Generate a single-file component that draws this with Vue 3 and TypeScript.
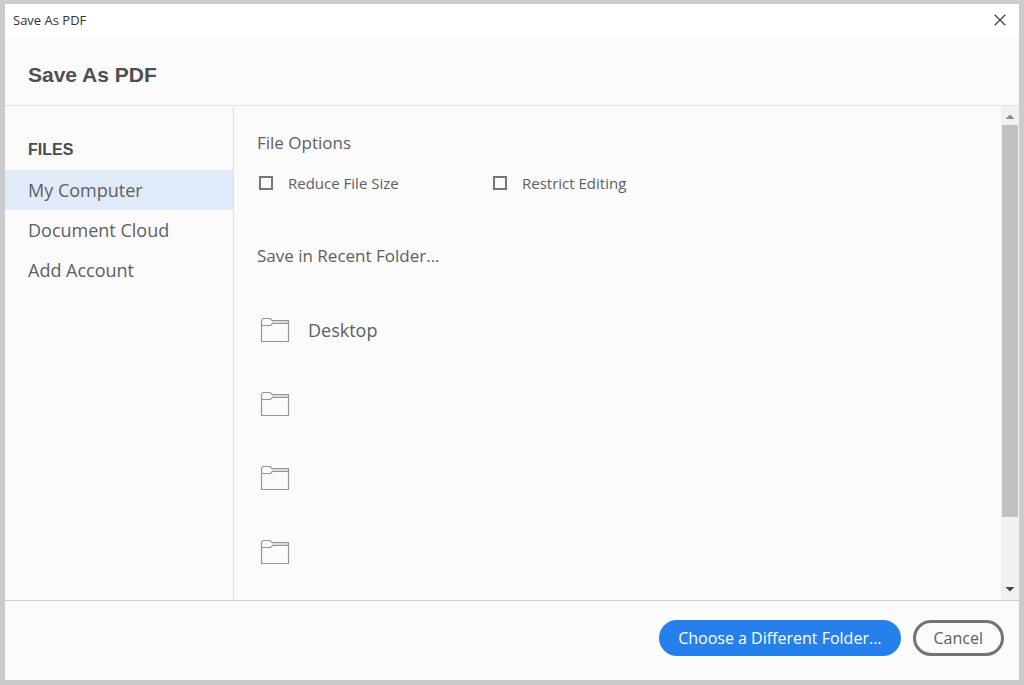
<script setup lang="ts">
import { ref } from 'vue'

interface Option {
  id: string
  label: string
  checked: boolean
}

const places: string[] = ['My Computer', 'Document Cloud', 'Add Account']
const selected = ref<string>('My Computer')
const options = ref<Option[]>([
  { id: 'reduce', label: 'Reduce File Size', checked: false },
  { id: 'restrict', label: 'Restrict Editing', checked: false },
])
const folders: string[] = ['Desktop', '', '', '']
</script>

<template>
  <div class="dialog" role="dialog" aria-labelledby="dialog-title">
    <div class="titlebar">
      <span>Save As PDF</span>
      <button class="close" type="button" aria-label="Close">
        <svg width="12" height="12" viewBox="0 0 12 12">
          <path d="M.7.7l10.6 10.6M11.3.7L.7 11.3" fill="none" stroke="#444" stroke-width="1.3" />
        </svg>
      </button>
    </div>

    <header class="header">
      <h1 id="dialog-title">Save As PDF</h1>
    </header>

    <div class="body">
      <nav class="sidebar">
        <h2>FILES</h2>
        <button
          v-for="place in places"
          :key="place"
          type="button"
          class="place"
          :class="{ active: place === selected }"
          @click="selected = place"
        >{{ place }}</button>
      </nav>

      <main class="content">
        <h3>File Options</h3>
        <div class="options">
          <label v-for="option in options" :key="option.id" :for="option.id">
            <input :id="option.id" v-model="option.checked" type="checkbox" />
            {{ option.label }}
          </label>
        </div>
        <h3>Save in Recent Folder...</h3>
        <ul class="folders">
          <li v-for="(folder, i) in folders" :key="i">
            <button type="button" class="folder" :aria-label="folder || 'Folder'">
              <svg width="30" height="26" viewBox="0 0 30 26" fill="none" stroke="#959595" stroke-width="1.2">
                <path d="M1.5 24.5V3.5L3 1.5H10L12 3.5H28.5V24.5Z" />
                <path d="M1.5 8.5H10.5L12.5 6.5H28.5" />
                <path d="M12 5H28" stroke="#c4c4c4" />
              </svg>
              <span>{{ folder }}</span>
            </button>
          </li>
        </ul>
      </main>

      <div class="scrollbar" aria-hidden="true">
        <svg width="16" height="19" viewBox="0 0 16 19"><path d="M3.5 13L8 8.5l4.5 4.5z" fill="#8b8b8b" /></svg>
        <div class="track"><div class="thumb"></div></div>
        <svg width="16" height="19" viewBox="0 0 16 19"><path d="M3.5 6L8 10.5l4.5-4.5z" fill="#444" /></svg>
      </div>
    </div>

    <footer class="footer">
      <button type="button" class="primary">Choose a Different Folder...</button>
      <button type="button" class="secondary">Cancel</button>
    </footer>
  </div>
</template>

<style>
body {
  margin: 0;
}
</style>

<style scoped>
.dialog {
  box-sizing: border-box;
  display: flex;
  flex-direction: column;
  min-height: 100vh;
  border: 5px solid #cbcbcb;
  border-top-width: 4px;
  background: #fbfbfb;
  color: #606060;
  font-family: "Open Sans", "Noto Sans", sans-serif;
  font-size: 18px;
}
button {
  margin: 0;
  padding: 0;
  border: 0;
  background: none;
  color: inherit;
  font: inherit;
  cursor: pointer;
}
h1,
h2,
h3 {
  margin: 0;
}
.titlebar {
  display: flex;
  align-items: center;
  justify-content: space-between;
  height: 32px;
  padding: 0 13px 1px 8px;
  background: #fff;
  color: #333;
  font-size: 13px;
}
.close {
  display: flex;
}
.header {
  display: flex;
  align-items: center;
  height: 68px;
  padding: 0 23px;
  border-bottom: 1px solid #e3e3e3;
}
.header h1 {
  padding-top: 8px;
  color: #4f4f4f;
  font: bold 21px/32px "Liberation Sans", Arial, sans-serif;
}
.body {
  display: flex;
  flex: 1;
}
.sidebar {
  box-sizing: border-box;
  width: 229px;
  border-right: 1px solid #e1e1e1;
}
.sidebar h2 {
  padding: 32px 23px 8px;
  color: #4b4b4b;
  font: bold 16px/24px "Liberation Sans", Arial, sans-serif;
}
.place {
  display: block;
  width: 100%;
  padding: 0 23px;
  line-height: 40px;
  text-align: left;
}
.place.active {
  background: #e1eaf8;
}
.content {
  flex: 1;
  padding: 24px 23px 0;
}
.content h3 {
  font-size: 17px;
  font-weight: 400;
  line-height: 26px;
}
.options {
  display: flex;
  padding: 14px 0 47px;
}
.options label {
  display: flex;
  align-items: center;
  width: 234px;
  font-size: 15px;
  line-height: 26px;
}
.options input {
  appearance: none;
  box-sizing: border-box;
  width: 14px;
  height: 14px;
  margin: 0 15px 0 2px;
  border: 2px solid #777;
}
.options input:checked {
  background: #2680eb;
}
.folders {
  margin: 0;
  padding: 24px 0 0;
  list-style: none;
}
.folder {
  display: flex;
  align-items: center;
  gap: 18px;
  height: 74px;
  padding-left: 3px;
}
.scrollbar {
  display: flex;
  flex-direction: column;
  align-items: center;
  width: 18px;
  background: #f1f1f1;
}
.track {
  flex: 1;
  width: 16px;
}
.thumb {
  height: 86%;
  background: #c1c1c1;
}
.footer {
  display: flex;
  justify-content: flex-end;
  gap: 12px;
  padding: 19px 15px 24px;
  border-top: 1px solid #cfcfcf;
}
.footer button {
  box-sizing: border-box;
  height: 36px;
  border-radius: 18px;
  font-size: 16px;
}
.footer .primary {
  padding: 0 19px;
  background: #2680eb;
  color: #fff;
}
.footer .secondary {
  padding: 0 18px;
  border: 3px solid #737373;
}
</style>
